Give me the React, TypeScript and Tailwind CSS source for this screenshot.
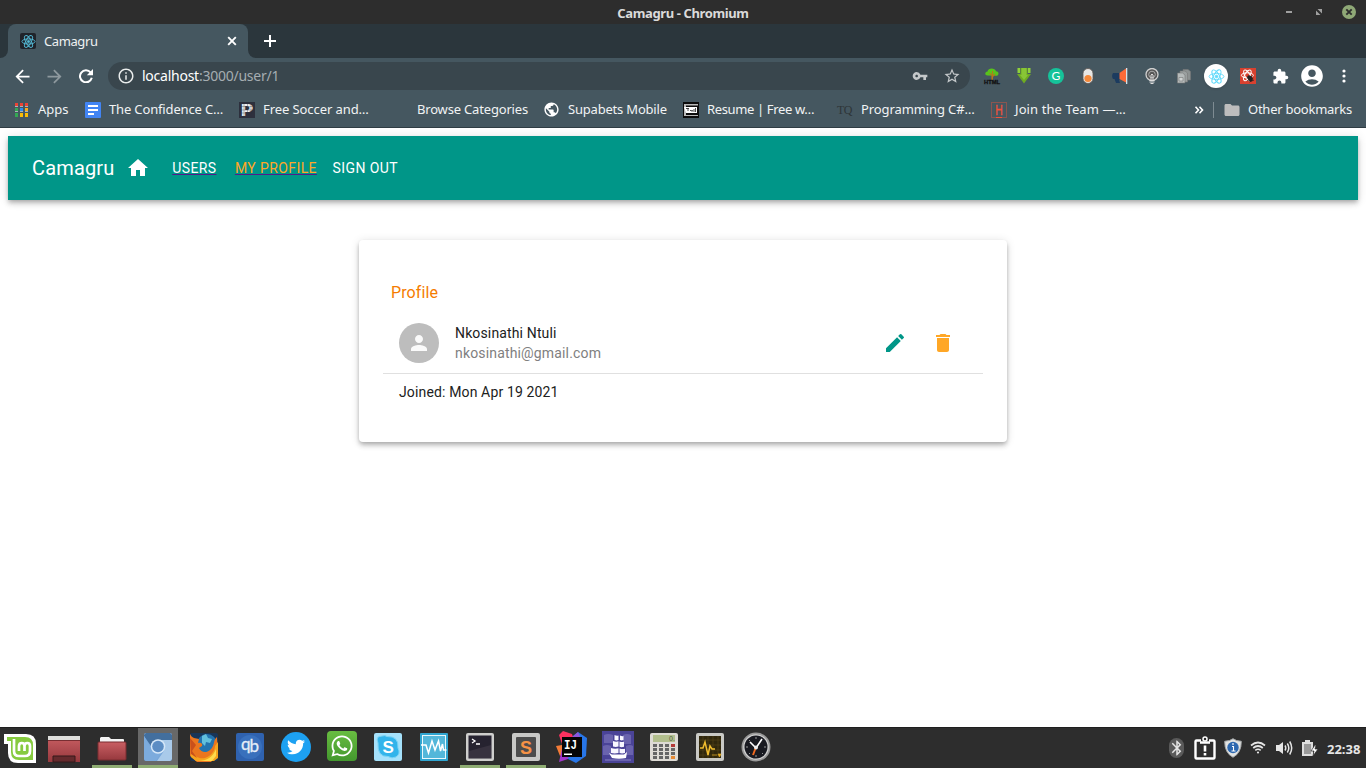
import React from "react";
import {
  MdHome, MdPerson, MdEdit, MdDelete, MdArrowBack, MdArrowForward, MdVpnKey, MdStarBorder,
  MdExtension, MdAccountCircle, MdInfoOutline, MdFolder, MdPublic, MdBluetooth,
} from "react-icons/md";
import { FaTwitter, FaWhatsapp } from "react-icons/fa";

type Kids = { children?: React.ReactNode };

function ReactAtom({ color, size, width = 1.2 }: { color: string; size: number; width?: number }) {
  return (
    <svg width={size} height={size} viewBox="0 0 24 24" fill="none" stroke={color} strokeWidth={width}>
      <ellipse cx="12" cy="12" rx="10.5" ry="4.2" />
      <ellipse cx="12" cy="12" rx="10.5" ry="4.2" transform="rotate(60 12 12)" />
      <ellipse cx="12" cy="12" rx="10.5" ry="4.2" transform="rotate(120 12 12)" />
      <circle cx="12" cy="12" r="1.8" fill={color} />
    </svg>
  );
}

function TitleBar() {
  return (
    <header className="grid h-6 grid-cols-[1fr_auto_1fr] items-center bg-[#2d2d2d] pt-0.5">
      <span />
      <h1 className="text-[13px] leading-5 font-bold tracking-[-0.38px] text-[#dadada]">Camagru - Chromium</h1>
      <div className="flex justify-end pr-[7px]">
        <svg width="74" height="16" viewBox="0 0 74 16" className="-mt-0.5">
          <path d="M1 7h6v2H1z" fill="#a0a0a0" />
          <path d="M32.500 5H37v4.500zM31 6.500V11h4.500z" fill="#a0a0a0" />
          <circle cx="64" cy="8" r="7" fill="#8fa876" />
          <path d="M61.300 5.300l5.400 5.400M66.700 5.300l-5.400 5.400" stroke="#2d2d2d" strokeWidth="1.900" />
        </svg>
      </div>
    </header>
  );
}

function TabStrip() {
  return (
    <div className="flex h-[34px] bg-[#2b363c]">
      <div className="flex w-2 items-end bg-[#455760]">
        <div className="h-full w-full rounded-br-lg bg-[#2b363c]" />
      </div>
      <div className="flex w-60 items-center rounded-t-lg bg-[#455760] pl-3">
        <span className="flex size-4 items-center justify-center rounded-[2px] bg-[#20232a]">
          <ReactAtom color="#53b8d4" size={15} width={1.5} />
        </span>
        <span className="mt-0.5 ml-2 text-[13px] tracking-[-0.4px] text-[#eef1f2]">Camagru</span>
        <svg width="10" height="10" viewBox="0 0 10 10" className="mr-[11px] ml-auto" stroke="#fff" strokeWidth="1.900">
          <path d="M1.200 1.200l7.600 7.600M8.800 1.200L1.200 8.800" />
        </svg>
      </div>
      <div className="flex flex-1 bg-[#455760]">
        <div className="flex flex-1 items-center rounded-bl-lg bg-[#2b363c] pl-4">
          <svg width="12" height="12" viewBox="0 0 12 12" fill="#fff"><path d="M5 0h2v5h5v2H7v5H5V7H0V5h5z" /></svg>
        </div>
      </div>
    </div>
  );
}

const Cell = ({ children }: Kids) => <span className="flex w-8 shrink-0 items-center justify-center">{children}</span>;

function Extensions() {
  return (
    <div className="ml-1.5 flex">
      <Cell>
        <svg width="18" height="20" viewBox="-1 -2 18 20" className="shrink-0">
          <path d="M3.500 7.500C.5 7.500.5 4 3.500 3.500 4-.5 11-.5 12 3.200c3.500.3 3.200 4.500 0 4.600z" fill="#58c31c" />
          <path d="M7.400 12V7.500L5 5h1.500L8 6.500V3h1v4l2-1.500V7L9 9v3z" fill="#b5761c" />
          <text x="0" y="15.500" fontSize="6" fontWeight="900" textLength="16" lengthAdjust="spacingAndGlyphs" fill="#111" stroke="#111" strokeWidth=".3" className="font-['Liberation_Sans',sans-serif]">HTML</text>
        </svg>
      </Cell>
      <Cell>
        <svg width="16" height="16" viewBox="0 0 16 16">
          <path d="M1.500 0H4v5H1.500zM12 0h2.500v5H12z" fill="#8fd13a" />
          <path d="M4.500 0h7v6H15l-7 9.500L1 6h3.500z" fill="#6fab22" />
          <path d="M5.500 0h5v7H12l-4 5-4-5h1.500z" fill="#88c536" />
        </svg>
      </Cell>
      <Cell>
        <span className="flex size-4 items-center justify-center rounded-full bg-[#15c39a] font-['Lato',sans-serif] text-[12px] leading-4 text-white">G</span>
      </Cell>
      <Cell>
        <svg width="16" height="16" viewBox="0 0 16 16">
          <rect x="3" y=".5" width="10" height="15" rx="5" fill="#e7e7e5" stroke="#5e5650" strokeWidth=".8" />
          <circle cx="8" cy="10.500" r="3.600" fill="#f4883a" />
        </svg>
      </Cell>
      <Cell>
        <svg width="16" height="16" viewBox="0 0 16 16">
          <path d="M1 5h7v6l-1 1 1 3H4l-1.500-4H1Q-.8 8 1 5z" fill="#1c3b5f" />
          <path d="M7.500 5L14 .5v14L7.500 11z" fill="#ff6b38" />
          <path d="M14 0h1.300v16H14z" fill="#d5e2e8" />
        </svg>
      </Cell>
      <Cell>
        <svg width="16" height="16" viewBox="0 0 16 16" fill="none">
          <circle cx="8" cy="6.500" r="6" fill="#565656" stroke="#d0d0d0" strokeWidth="1.300" />
          <circle cx="8" cy="6.500" r="3.300" stroke="#aaa" strokeWidth="1" />
          <path d="M7 12V7l1-1 1 1v5" stroke="#ddd" />
          <path d="M5.500 12.500h5M5.500 14h5M6.500 15.500h3" stroke="#ddd" />
        </svg>
      </Cell>
      <Cell>
        <svg width="16" height="16" viewBox="0 0 16 16" stroke="#777" strokeWidth=".6">
          <path d="M7 1.500h5l2.500 2V12H7z" fill="#8d9292" />
          <path d="M4 3h5l2.500 2v9H4z" fill="#9ba0a0" />
          <path d="M1.500 5h5L9 7v8H1.500z" fill="#b6bbbb" />
          <path d="M3 9.500h4v3.500H3z" fill="#d1d4d4" />
        </svg>
      </Cell>
      <Cell>
        <span className="flex size-6 shrink-0 items-center justify-center rounded-full bg-white shadow-sm">
          <ReactAtom color="#61dafb" size={17} width={1.3} />
        </span>
      </Cell>
      <Cell>
        <span className="flex size-4 items-center justify-center bg-[#d8412f]">
          <svg width="16" height="16" viewBox="0 0 24 24" fill="none" stroke="#fff" strokeWidth="1.500">
            <ellipse cx="11" cy="11" rx="9" ry="3.800" />
            <ellipse cx="11" cy="11" rx="9" ry="3.800" transform="rotate(60 11 11)" />
            <ellipse cx="11" cy="11" rx="9" ry="3.800" transform="rotate(120 11 11)" />
            <ellipse cx="15" cy="15.500" rx="3.300" ry="5" fill="#222" stroke="none" transform="rotate(-35 15 15.500)" />
            <path d="M10 15l9-3M11 19l9-4M14 21l7-3" stroke="#222" strokeWidth="1.200" />
          </svg>
        </span>
      </Cell>
      <Cell><MdExtension className="size-[17px] text-white" /></Cell>
      <Cell><MdAccountCircle className="size-[26px] shrink-0 text-white" /></Cell>
      <Cell>
        <svg width="4" height="14" viewBox="0 0 4 14" fill="#fff">
          <circle cx="2" cy="2" r="1.600" /><circle cx="2" cy="7" r="1.600" /><circle cx="2" cy="12" r="1.600" />
        </svg>
      </Cell>
    </div>
  );
}

function Toolbar() {
  return (
    <div className="flex h-9 items-stretch bg-[#455760] pl-1.5">
      <Cell><MdArrowBack className="size-[21px] text-white" /></Cell>
      <Cell><MdArrowForward className="size-[21px] text-[#8e999e]" /></Cell>
      <Cell>
        <svg width="14" height="14" viewBox="0 0 14 14" fill="none">
          <path d="M11.600 3.400A6 6 0 1 0 12.800 8.800" stroke="#fff" strokeWidth="2" /><path d="M14 0v6.200H7.800z" fill="#fff" />
        </svg>
      </Cell>
      <div className="mt-1 ml-1.5 flex h-7 w-[862px] items-center rounded-full bg-[#39464d] pl-[9px]">
        <MdInfoOutline className="size-[18px] text-[#e9ecec]" />
        <span className="ml-[7px] text-sm tracking-[-0.25px] text-[#a5adb1]"><span className="text-white">localhost</span>:3000/user/1</span>
        <MdVpnKey className="ml-auto size-4 text-[#c4c8ca]" />
        <MdStarBorder className="mr-[9px] ml-[15px] size-[18px] text-[#c4c8ca]" />
      </div>
      <Extensions />
    </div>
  );
}

function AppsGrid() {
  const rows = [
    ["#ea4335", "#ea4335", "#ea4335"],
    ["#34a853", "#2d8cf0", "#fbab1a"],
    ["#34a853", "#fbbc05", "#fbbc05"],
  ];
  return (
    <svg width="16" height="16" viewBox="0 0 16 16">
      {rows.map((r, y) => r.map((c, x) => (
        <g key={`${x}${y}`}>
          <rect x={2 + x * 5} y={1 + y * 5} width="3" height={y === 0 ? 3 : 4} fill={c} />
          {y < 2 && <rect x={2 + x * 5} y={y * 5 + 4} width="3" height="1" fill="#aab3b8" />}
        </g>
      )))}
    </svg>
  );
}

function BookmarksBar() {
  return (
    <nav className="flex h-[34px] items-center border-b border-[#2f3c43] bg-[#455760] pl-[13px] text-[13px] whitespace-nowrap text-[#f1f3f4] [&_span]:-mt-0.5 [&_svg]:-mt-0.5 [&_svg]:shrink-0">
      <div className="flex w-[72px] items-center gap-[9px]"><AppsGrid /><span className="tracking-[0px]">Apps</span></div>
      <div className="flex w-[154px] items-center gap-2">
        <svg width="16" height="16" viewBox="0 0 16 16"><rect width="16" height="16" rx="1" fill="#4285f4" /><path d="M3 3h10v2H3zM3 7h10v2H3zM3 11h6v2H3z" fill="#fff" /></svg>
        <span className="tracking-[-0.15px]">The Confidence C…</span>
      </div>
      <div className="flex w-[154px] items-center gap-2">
        <svg width="16" height="16" viewBox="0 0 16 16">
          <rect width="16" height="16" fill="#2d303d" />
          <text x="1.500" y="14" fontSize="18" fontWeight="700" textLength="13" lengthAdjust="spacingAndGlyphs" fill="#f0f0f2" className="font-['Liberation_Mono',monospace]">P</text>
          <path d="M5 1v14M2 4.500h12M2 8h12M2 11h12M8.500 1v14M12 1v14" stroke="#2d303d" strokeWidth=".35" />
        </svg>
        <span className="tracking-[-0.08px]">Free Soccer and…</span>
      </div>
      <div className="w-[151px] pl-6"><span className="relative -top-px tracking-[-0.18px]">Browse Categories</span></div>
      <div className="flex w-[139px] items-center gap-2"><MdPublic className="-mx-px size-[17px] text-white" /><span className="ml-px tracking-[-0.2px]">Supabets Mobile</span></div>
      <div className="flex w-[154px] items-center gap-2">
        <svg width="16" height="16" viewBox="0 0 16 16"><rect width="16" height="16" fill="#0c0c0c" /><path d="M1 2h14v1.500H3V13h12v1H1z" fill="#b9b9b9" /><path d="M1 5h13v6H3z" fill="#fff" /><path d="M3 6.500h3M5 6.500V9M7 9l1-1 1 1.500L10 8M11 7v3M12.500 6v4" stroke="#222" strokeWidth=".8" fill="none" /></svg>
        <span className="tracking-[-0.36px]">Resume | Free w…</span>
      </div>
      <div className="flex w-[154px] items-center gap-2">
        <span className="w-4 shrink-0 font-['Liberation_Serif',serif] text-[12px] tracking-[-0.5px] text-[#2e3538]">TQ</span>
        <span className="tracking-[-0.1px]">Programming C#…</span>
      </div>
      <div className="flex w-[203px] items-center gap-2">
        <svg width="16" height="16" viewBox="0 0 16 16" fill="none">
          <rect x=".5" y=".5" width="15" height="15" stroke="#8a5550" />
          <text x="4.300" y="12.500" fontSize="14" textLength="7.500" lengthAdjust="spacingAndGlyphs" fill="#f0523a" stroke="#f0523a" strokeWidth=".3" className="font-['Liberation_Sans',sans-serif]">H</text>
          <path d="M5 15.500h6" stroke="#f0523a" />
        </svg>
        <span className="tracking-[0.1px]">Join the Team —…</span>
      </div>
      <svg width="10" height="10" viewBox="0 0 10 10" fill="none" stroke="#fff" strokeWidth="1.600"><path d="M1.500 1.800L4.500 5 1.500 8.200M5.500 1.800L8.500 5 5.500 8.200" /></svg>
      <span className="ml-[9px] h-4 w-px bg-[#7e8b92]" />
      <MdFolder className="ml-[9px] size-[18px] text-[#bdbdbd]" />
      <span className="ml-[7px] tracking-[-0.25px]">Other bookmarks</span>
    </nav>
  );
}

const elevation =
  "shadow-[0px_2px_4px_-1px_rgba(0,0,0,0.2),0px_4px_5px_0px_rgba(0,0,0,0.14),0px_1px_10px_0px_rgba(0,0,0,0.12)]";

function Page() {
  return (
    <main className="flex-1 overflow-hidden bg-white p-2 font-[Roboto,sans-serif]">
      <div className={`flex h-16 items-center bg-[#009688] pl-6 text-white ${elevation}`}>
        <span className="text-xl tracking-[0.15px]">Camagru</span>
        <MdHome className="ml-3 size-6" />
        <nav className="flex text-sm tracking-[0.4px]">
          <a className="ml-[21.800px] w-[62.700px] underline decoration-[#551a8b]">USERS</a>
          <a className="w-[97.700px]"><span className="text-[#ffa726] underline decoration-[#551a8b]">MY PROFILE</span></a>
          <a>SIGN OUT</a>
        </nav>
      </div>
      <section className={`mx-auto mt-10 h-[202px] w-[648px] rounded bg-white p-6 ${elevation}`}>
        <h2 className="mt-[17px] ml-2 text-base leading-6 tracking-[0.12px] text-[#f57c00]">Profile</h2>
        <div className="mt-2 flex h-[61px] items-center border-b border-[#e0e0e0] px-4">
          <span className="flex size-10 items-center justify-center rounded-full bg-[#bdbdbd]"><MdPerson className="size-6 text-[#fafafa]" /></span>
          <div className="ml-4 text-sm leading-5 tracking-[0.14px] text-[#212121]">
            <p>Nkosinathi Ntuli</p>
            <p className="tracking-[0.16px] text-[#808080]">nkosinathi@gmail.com</p>
          </div>
          <MdEdit className="ml-auto size-6 text-[#009688]" />
          <MdDelete className="mr-3 ml-6 size-6 text-[#ffa726]" />
        </div>
        <p className="mt-2 ml-4 text-sm leading-5 tracking-[0.14px] text-[#212121]">Joined: Mon Apr 19 2021</p>
      </section>
    </main>
  );
}

function Launcher({ children, open, active }: Kids & { open?: boolean; active?: boolean }) {
  return (
    <span className={`flex h-full w-10 shrink-0 items-center justify-center border-b-[3px] pt-px ${open ? "border-[#8fad73]" : "border-transparent"} ${active ? "bg-[#686868]" : ""}`}>
      {children}
    </span>
  );
}

const Glyph = ({ children }: Kids) => (
  <svg width="30" height="30" viewBox="0 0 30 30" className="shrink-0">{children}</svg>
);

function Taskbar() {
  return (
    <footer className="flex h-[41px] items-center border-t border-[#1f1f1f] bg-[#2d2d2d]">
      <svg width="34" height="32" viewBox="0 0 34 32" className="mt-0.5 ml-[3px]">
        <path d="M1 1h22q10 0 10 10v19H15Q5 30 5 20V11H1z" fill="#fff" />
        <path d="M4 4h18q8 0 8 8v15H16q-8 0-8-8V8H4z" fill="#86cb3f" />
        <path d="M11 6v12q0 5 5 5h6q5 0 5-5v-5q0-3-2.700-3T21.500 13v5M21.500 13q0-3-2.700-3T16 13v5" fill="none" stroke="#fff" strokeWidth="2.700" />
      </svg>
      <svg width="32" height="28" viewBox="0 0 32 28" className="mt-0.5 ml-[11px]">
        <defs>
          <linearGradient id="red" x1="0" y1="0" x2="0" y2="1"><stop stopColor="#c95f63" /><stop offset="1" stopColor="#97393e" /></linearGradient>
        </defs>
        <rect y="1" width="32" height="26" fill="url(#red)" />
        <path d="M0 1h32v4H0z" fill="#dededc" />
        <path d="M0 5h32v1H0z" fill="#782e32" />
        <path d="M5 27v-6h22v6z" fill="#642a2d" stroke="#35191a" />
      </svg>
      <div className="ml-3 flex h-full items-center gap-1.5">
        <Launcher open>
          <Glyph>
            <path d="M3 9V6l1-1h8l2 2h12q1 0 1 1v4H3z" fill="#f4f4f4" />
            <rect x="1" y="10" width="28" height="18" rx="1" fill="url(#red)" stroke="#7a2c30" />
          </Glyph>
        </Launcher>
        <Launcher open active>
          <Glyph>
            <rect x="1" y="1" width="28" height="28" rx="2" fill="#78a7da" />
            <path d="M3 1h24l2 2v5H15q-5 0-7 6L1 4V3z" fill="#436f9e" />
            <path d="M16 8h13v19l-2 2H14l7-10z" fill="#a9caea" />
            <path d="M1 4l8 14 8 4-4 7H3l-2-2z" fill="#7cabdd" />
            <circle cx="15" cy="14.500" r="7.300" fill="#d5e7f8" /><circle cx="15" cy="14.500" r="5.800" fill="#5c8dc4" />
          </Glyph>
        </Launcher>
        <Launcher>
          <Glyph>
            <rect x="1" y="1" width="28" height="28" rx="2" fill="#183558" />
            <circle cx="18" cy="12" r="10" fill="#2474b0" /><path d="M13 4l4-2 2 4 4 1-2 4-4-1-1 4-3-3z" fill="#62bfdc" />
            <path d="M1 2c1 2 2 3 4 4l5 1-1 4c3-1 5 1 4 3l-3 2c2 5 8 5 11 2 5-4 3-9 6-12l1-1 1 17-7 8H8L1 24z" fill="#eb761e" />
            <path d="M2 19c5 8 12 9 18 5 3-2 6-6 6-10l3-4v16l-4 3H7l-5-4z" fill="#f6a51e" />
            <path d="M9 29c9 0 15-4 18-12v7l-4 5z" fill="#ffdb4d" /><path d="M1 6l6 7-4 6 5 7-6-4z" fill="#c9501b" />
          </Glyph>
        </Launcher>
        <Launcher>
          <Glyph>
            <rect x="1" y="1" width="28" height="28" rx="2" fill="#2f62af" />
            <circle cx="15" cy="15" r="12" fill="#3970bc" />
            <text x="6" y="17.500" fontSize="17" fill="#e5edf7" stroke="#e5edf7" strokeWidth=".3" className="font-['Lato',sans-serif]">q</text>
            <text x="14.500" y="19.500" fontSize="17" fill="#e5edf7" stroke="#e5edf7" strokeWidth=".3" className="font-['Lato',sans-serif]">b</text>
          </Glyph>
        </Launcher>
        <Launcher><span className="flex size-[30px] items-center justify-center rounded-full bg-[#1da1f2]"><FaTwitter className="size-[18px] text-white" /></span></Launcher>
        <Launcher><span className="-mt-0.5 flex size-[30px] items-center justify-center rounded-sm bg-linear-to-b from-[#68bd41] to-[#43982e]"><FaWhatsapp className="size-6 text-white" /></span></Launcher>
        <Launcher>
          <Glyph>
            <rect x="1" y="1" width="28" height="28" rx="2" fill="#a5e1fb" />
            <path d="M5 11Q2 4 9 4q3-1 5 .5Q26 4 25 16q3 6-2 9-4 2-8-.5Q4 25 5 11z" fill="#32b4eb" stroke="#7fd6f6" />
            <text x="15.200" y="21" fontSize="17" fontWeight="700" textAnchor="middle" fill="#fff" className="font-['Liberation_Sans',sans-serif]">S</text>
          </Glyph>
        </Launcher>
        <Launcher>
          <Glyph>
            <rect x="1" y="1" width="28" height="28" rx="1" fill="#30a5d0" /><rect x="3.500" y="3.500" width="23" height="23" fill="#53b7da" stroke="#e8f7fc" />
            <path d="M2 13h5l2.500 8 3.500-12 3 9 3.500-9 2 10 2-7 1 6h3" fill="none" stroke="#fff" strokeWidth="1.500" />
          </Glyph>
        </Launcher>
        <Launcher open>
          <Glyph>
            <rect x="1" y="1" width="28" height="28" rx="2" fill="#cfcfcd" /><rect x="3.500" y="3.500" width="23" height="23" fill="#262330" />
            <path d="M4 19l22-6v13H4z" fill="#37323f" />
            <path d="M7 7l3 2-3 2M11 12h4" fill="none" stroke="#fff" strokeWidth="1.300" />
          </Glyph>
        </Launcher>
        <Launcher open>
          <Glyph>
            <rect x="1" y="1" width="28" height="28" rx="2" fill="#c8c8c6" /><rect x="5" y="5" width="20" height="20" rx="1" fill="#4c4c4c" />
            <text x="15" y="21.500" fontSize="18" fontWeight="700" textAnchor="middle" fill="#f59245" className="font-['Liberation_Sans',sans-serif]">S</text>
          </Glyph>
        </Launcher>
        <Launcher>
          <svg width="32" height="32" viewBox="0 0 32 32" className="shrink-0">
            <path d="M3 4l4-4 9 3 3 9-8 14-6-7 1-6z" fill="#fc315f" /><path d="M0 15l6-1 3 8-5 3z" fill="#f37b37" /><path d="M6 18l-3 13 9-3 5-4z" fill="#a035cb" />
            <path d="M17 5l5-4 9 6-1 18-10 7-8-4z" fill="#2876e8" /><path d="M16 6l6-5 3 7z" fill="#8f56db" />
            <rect x="6" y="6" width="20" height="20" fill="#050505" />
            <text x="8" y="17.500" fontSize="12" fontWeight="700" textLength="13" lengthAdjust="spacingAndGlyphs" fill="#fff" className="font-['Liberation_Mono',monospace]">IJ</text>
            <path d="M8 22.500h8V24H8z" fill="#fff" />
          </svg>
        </Launcher>
        <Launcher>
          <svg width="32" height="32" viewBox="0 0 32 32" className="shrink-0">
            <rect width="32" height="32" fill="#4a4397" />
            <path d="M2 4q4-2 9 0v8H2zM21 4q4-2 8 0v9h-8zM1 15q4-2 8 0v9H1zM24 15q4-2 7 0v9h-7zM3 28h26v2H3z" fill="#6a63ad" />
            <path d="M12.500 4q2 1.200 4 .5v4.500q-2 .8-4 0zM18 4.500q2 1 3.500.5v4q-2 .8-3.500 0zM11 10q3 1.200 5.500.3v5.200q-3 .8-5.500 0zM17.500 10.500q2.500 1 4.500.3v5q-2.500.8-4.500 0zM9 17q4 1.200 7.500.3v4.700q-4 .8-7.500 0zM17.500 17.500q3 1 5.500.3V22q-3 .8-5.500 0z" fill="#f8f7ff" />
            <path d="M7 22l3 1.500h12l3-2.500-1 6q-7 1.500-14 0z" fill="#fff" />
          </svg>
        </Launcher>
        <Launcher>
          <Glyph>
            <rect x="1" y="1" width="28" height="28" rx="2" fill="#dedbd5" /><rect x="4" y="3" width="22" height="7" fill="#b2be8d" />
            <text x="20" y="9" fontSize="7" fill="#556044" className="font-['Liberation_Sans',sans-serif]">0.</text>
            {[0, 1, 2, 3].map((y) => [0, 1, 2, 3].map((x) => (
              <rect key={`${x}${y}`} x={4 + x * 6} y={12 + y * 4} width="4" height="3" fill={x === 3 && y === 0 ? "#b43a37" : x === 3 && y === 3 ? "#e68a35" : "#666"} />
            )))}
          </Glyph>
        </Launcher>
        <Launcher>
          <Glyph>
            <rect x="1" y="1" width="28" height="28" rx="2" fill="#c9c9c5" /><rect x="4" y="4" width="22" height="22" fill="#30270c" />
            <path d="M8 4v22M13 4v22M18 4v22M23 4v22M4 8h22M4 13h22M4 18h22M4 23h22" stroke="#57461b" strokeWidth=".6" />
            <path d="M5 16h3l2-6 3 13 2-9 2 3h3" fill="none" stroke="#f0bc2e" strokeWidth="1.500" /><path d="M17 23h5M23 22h3l-1.500 3z" stroke="#e4ac24" fill="#e4ac24" strokeWidth=".7" />
          </Glyph>
        </Launcher>
        <Launcher>
          <Glyph>
            <circle cx="15" cy="15" r="14.500" fill="#999" /><circle cx="15" cy="15" r="12.800" fill="#d0d0d0" /><circle cx="15" cy="15" r="11.500" fill="#191a21" />
            <path d="M15 5v2M15 23v2M5 15h2M23 15h2M8 8l1 1M8 22l1-1M22 22l-1-1" stroke="#999" />
            <path d="M9 10l6 6 6-9" fill="none" stroke="#fff" strokeWidth="1.600" /><path d="M15 15l-3 8" stroke="#f26b21" strokeWidth="2" /><circle cx="15" cy="15.500" r="2" fill="#eee" />
          </Glyph>
        </Launcher>
      </div>
      <div className="ml-auto flex items-center pr-1 text-[#e5e5e5]">
        <span className="flex h-5 w-[15px] items-center justify-center rounded-lg bg-[#5a5a5a]"><MdBluetooth className="size-[18px] shrink-0" /></span>
        <svg width="22" height="24" viewBox="0 0 22 24" className="mr-[7px] ml-[10px]" fill="none" stroke="#fff">
          <path d="M7 4.500H2.500Q1.500 4.500 1.500 5.500v16q0 1 1 1h17q1 0 1-1v-16q0-1-1-1H15" strokeWidth="2.400" /><circle cx="11" cy="3" r="2" strokeWidth="1.500" /><path d="M6 6.500h10M11 9.500v6M11 17v2.500" strokeWidth="2.600" />
        </svg>
        <svg width="20" height="20" viewBox="0 0 18 20"><path d="M9 .7Q12 3 17.300 3.300 17.500 15 9 19.300.5 15 .7 3.300 6 3 9 .7z" fill="#e2e3e2" stroke="#a3a6a8" /><circle cx="9" cy="9.500" r="5.700" fill="#2d68b0" /><path d="M8 8.500h1.500V13M7.500 13h4M9 5v2" fill="none" stroke="#fff" strokeWidth="1.100" /></svg>
        <svg width="16" height="13" viewBox="0 0 16 13" className="-mt-0.5 mr-px ml-[7px]" fill="none" stroke="currentColor" strokeWidth="1.700">
          <path d="M1 4.500Q8-1.500 15 4.500M3.200 7Q8 3 12.800 7M5.300 9.300Q8 7.200 10.700 9.300" /><circle cx="8" cy="11.500" r="1.100" fill="currentColor" stroke="none" />
        </svg>
        <svg width="17" height="16" viewBox="0 0 17 16" className="ml-[9px]" fill="none" stroke="currentColor" strokeWidth="1.500">
          <path d="M0 5h3l4-3v12l-4-3H0z" fill="currentColor" stroke="none" /><path d="M9 5.500q1.500 2.500 0 5M11.300 3.500q3 4.500 0 9M13.700 1.500q4 6.500 0 13" />
        </svg>
        <svg width="16" height="17" viewBox="0 0 16 17" className="ml-[9px]"><path d="M3 0h5v2h3v14H0V2h3z" fill="#dedede" /><path d="M2 4h7v10H2z" fill="#999" /><path d="M13 5l-4 6h3l-1 5 5-7h-3l1-4z" fill="#fff" stroke="#2d2d2d" strokeWidth=".7" /></svg>
        <time className="mt-0.5 ml-[9px] w-[35px] text-[13px] leading-4 font-bold tracking-[0px] whitespace-nowrap">22:38</time>
      </div>
    </footer>
  );
}

export default function App() {
  return (
    <div className="flex h-screen w-screen flex-col overflow-hidden font-['Noto_Sans',sans-serif]">
      <TitleBar />
      <TabStrip />
      <Toolbar />
      <BookmarksBar />
      <Page />
      <Taskbar />
    </div>
  );
}
